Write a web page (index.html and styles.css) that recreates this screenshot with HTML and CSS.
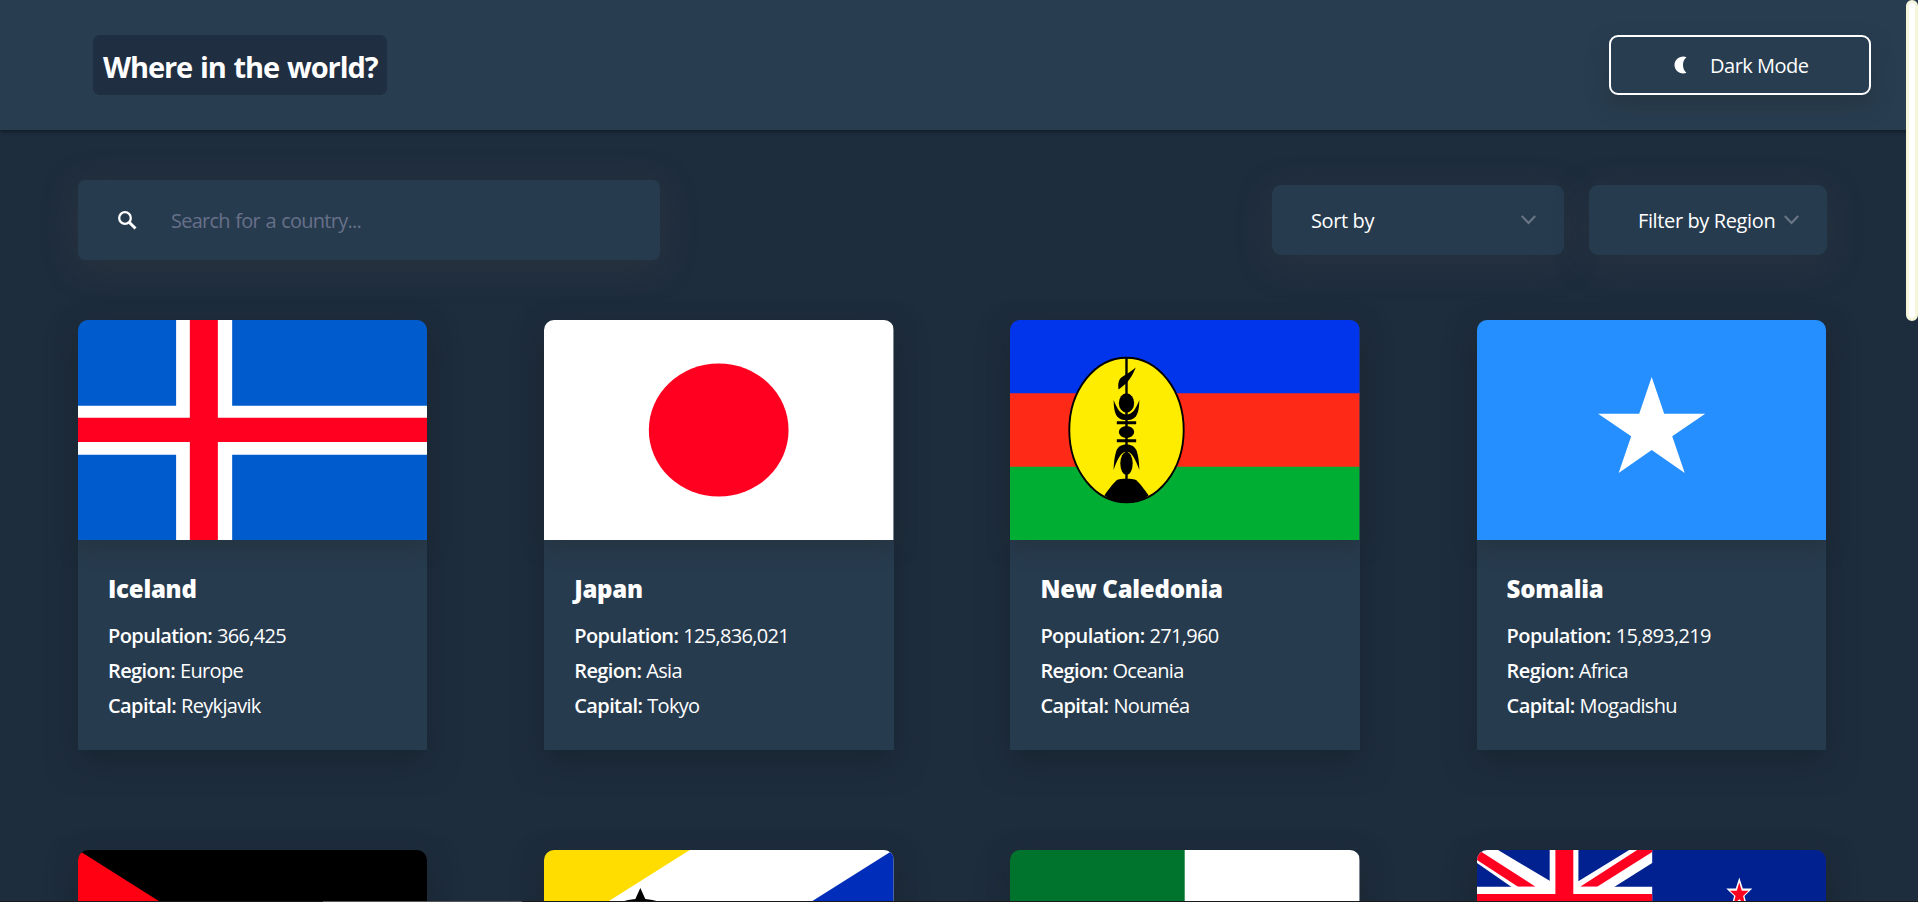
FILE: index.html
```
<!DOCTYPE html>
<html lang="en">
<head>
<meta charset="utf-8">
<title>Where in the world?</title>
<link rel="stylesheet" href="styles.css">
</head>
<body>
<div class="page">
  <header class="header">
    <h1 class="brand"><span>Where in the world?</span></h1>
    <button class="mode">
      <svg class="moon" width="13" height="18" viewBox="0 0 13 18"><path d="M12.500 1.200C10.200 3 9 5.800 9 9s1.200 6 3.500 7.800C11.600 17.200 10.500 17.500 9.300 17.500 4.400 17.500.5 13.700.5 9S4.400.5 9.300.5c1.200 0 2.300.2 3.200.7z" fill="#fff"/></svg>
      <span>Dark Mode</span>
    </button>
  </header>
  <div class="controls">
    <label class="search">
      <svg class="lens" width="19" height="19" viewBox="0 0 19 19" fill="none" stroke="#fff"><circle cx="7" cy="7" r="5.800" stroke-width="2.300"/><path d="M11.200 11.200L17.500 17.500" stroke-width="3"/></svg>
      <span>Search for a country...</span>
    </label>
    <div class="selects">
      <div class="select sort"><span>Sort by</span>
        <svg width="15" height="10" viewBox="0 0 15 10" fill="none" stroke="#6b7687" stroke-width="2"><path d="M.8 1l6.700 7L14.200 1"/></svg></div>
      <div class="select filter"><span>Filter by Region</span>
        <svg width="15" height="10" viewBox="0 0 15 10" fill="none" stroke="#6b7687" stroke-width="2"><path d="M.8 1l6.700 7L14.200 1"/></svg></div>
    </div>
  </div>
  <main class="grid">
    <article class="card">
      <svg class="flag" viewBox="0 0 349 220" preserveAspectRatio="none"><path fill="#005bcc" d="M0 0h349v220H0z"/><path fill="#fff" d="M98 0h56v220H98zM0 85.700h349v49H0z"/><path fill="#ff0020" d="M111.700 0h28v220h-28zM0 97.700h349v24.300H0z"/></svg>
      <div class="info"><h2>Iceland</h2><p><b>Population:</b> 366,425</p><p><b>Region:</b> Europe</p><p><b>Capital:</b> Reykjavik</p></div>
    </article>
    <article class="card">
      <svg class="flag" viewBox="0 0 350 220" preserveAspectRatio="none"><path fill="#fff" d="M0 0h350v220H0z"/><ellipse cx="175" cy="110" rx="70" ry="66.500" fill="#ff0020"/></svg>
      <div class="info"><h2>Japan</h2><p><b>Population:</b> 125,836,021</p><p><b>Region:</b> Asia</p><p><b>Capital:</b> Tokyo</p></div>
    </article>
    <article class="card">
      <svg class="flag" viewBox="0 0 350 220" preserveAspectRatio="none"><path fill="#0035ec" d="M0 0h350v74H0z"/><path fill="#ff2917" d="M0 73.300h350v74H0z"/><path fill="#00ae33" d="M0 146.700h350V220H0z"/><ellipse cx="116.700" cy="110" rx="57.300" ry="72.300" fill="#ffed00" stroke="#000" stroke-width="1.900"/>
        <path d="M115.500 38h2.400v132h-2.400z"/><path d="M126 47.500c-5 4.500-11 7.500-14.500 10-3 2.700-3.500 7-2.700 12C116 64 121 60 126 47.500z"/><ellipse cx="116.700" cy="83" rx="7.700" ry="9.700"/><path d="M103.800 80c3.500 9 7 14.500 12.900 14.500S126 89 129.600 80c-.3 8-1 13-3.500 16.500-2.500 3-6 3.500-9.400 3.500s-7-.5-9.400-3.500C104.800 93 104 88 103.800 80z"/><path d="M107 101.200h19.400v3H107zM107 119.300h19.400v3H107z"/><ellipse cx="116.700" cy="112" rx="7.700" ry="6"/><path d="M103.800 150c.3-8 .8-13 2.800-19.500 2-4.500 6-6 10.100-6s8 1.500 10.100 6c2 6.500 2.500 11.500 2.800 19.500-3.500-9-7-18.500-12.900-18.500S107 141 103.800 150z"/><ellipse cx="116.700" cy="143.500" rx="6.200" ry="11.500"/><path d="M94.500 175.500c4-6 9-12 12.500-15.500 3-1.800 16-1.800 19.400 0 3.500 3.500 8.500 9.500 12.500 15.500-11 9-33 9-44.400 0z"/></svg>
      <div class="info"><h2>New Caledonia</h2><p><b>Population:</b> 271,960</p><p><b>Region:</b> Oceania</p><p><b>Capital:</b> Nouméa</p></div>
    </article>
    <article class="card">
      <svg class="flag" viewBox="0 0 349 220" preserveAspectRatio="none"><path fill="#258fff" d="M0 0h349v220H0z"/><path fill="#fff" d="M174.500 57l12.500 36.800h41L195 116.300l12.500 36.700-33-23-33 23 12.500-36.700-33-22.500h41z"/></svg>
      <div class="info"><h2>Somalia</h2><p><b>Population:</b> 15,893,219</p><p><b>Region:</b> Africa</p><p><b>Capital:</b> Mogadishu</p></div>
    </article>
    <article class="card">
      <svg class="flag" viewBox="0 0 349 220" preserveAspectRatio="none"><path d="M0 0h349v73H0z"/><path fill="#fff" d="M0 73h349v74H0z"/><path fill="#007a3d" d="M0 147h349v73H0z"/><path fill="#ff0012" d="M0 0l174 110L0 220z"/></svg>
    </article>
    <article class="card">
      <svg class="flag" viewBox="0 0 350 220" preserveAspectRatio="none"><path fill="#fff" d="M100 0h250v220H0V80z"/><path fill="#ffdd00" d="M0 0h146L0 92z"/><path fill="#002db9" d="M350 0v220H0z"/><path d="M96.500 38l5 11c7 .5 12 2 17 5H74.500c5-3 10-4.500 17-5z"/></svg>
    </article>
    <article class="card">
      <svg class="flag" viewBox="0 0 350 220" preserveAspectRatio="none"><path fill="#fff" d="M174 0h176v220H174z"/><path fill="#00732c" d="M0 0h175v220H0z"/></svg>
    </article>
    <article class="card">
      <svg class="flag" viewBox="0 0 349 220" preserveAspectRatio="none"><path fill="#00218f" d="M0 0h349v220H0z"/><path fill="#fff" d="M0 0h21l52 31v7H36L0 13zM152 0h23v13l-38 24h-37v-5z"/><path fill="#ff0020" d="M0 1l3 0L58.500 36.700H41L0 10zM160 0h15v2l-55 34.700h-17z"/><path fill="#fff" d="M72.600 0h28.700v110H72.600zM0 36.700h175v36.600H0z"/><path fill="#ff0020" d="M78.300 0h17.900v110H78.300zM0 44h175v22H0z"/><path fill="#fff" d="M262 27.500l3.500 11H275l-7.800 7.500 3 12-8.200-7-8.200 7 3-12-7.800-7.500h9.500z"/><path fill="#ff0020" d="M262 32.500l2.500 8.300h6.800L265.800 46l2 8.500-5.800-5.200-5.800 5.200 2-8.500-5.500-5.200h6.800z"/></svg>
    </article>
  </main>
  <div class="thumb"></div>
  <div class="edge"></div>
</div>
</body>
</html>
```
FILE: styles.css
```
* { box-sizing: border-box; }
body { margin: 0; background: #1e2d3e; color: #fff; font-family: "Segoe UI", "Open Sans", "Noto Sans", sans-serif; font-size: 20px; }
.page { position: relative; width: 1918px; height: 902px; overflow: hidden; background: #1e2d3e; }
span { white-space: nowrap; }
.header { display: flex; align-items: center; justify-content: space-between; height: 130px; padding: 0 47px 0 93px; background: #283d50; box-shadow: 0 2px 4px rgba(0,0,0,.4); }
.brand { display: flex; align-items: center; width: 294px; height: 60px; margin: 0; padding: 2px 10px 0; border-radius: 7px; background: #1f2e40; font-size: 29px; font-weight: 700; letter-spacing: -1.100px; word-spacing: 1.500px; }
.mode { display: flex; align-items: center; width: 262px; height: 60px; padding: 0 0 0 63px; gap: 23px; border: 2px solid #fff; border-radius: 9px; background: #283d50; color: #fff; font: 500 20px "Segoe UI", "Open Sans", "Noto Sans", sans-serif; letter-spacing: -.5px; box-shadow: 0 10px 20px rgba(35,48,54,.5); }
.controls { display: flex; align-items: center; justify-content: space-between; height: 80px; margin: 50px 91px 60px 78px; }
.search { display: flex; align-items: center; gap: 34px; width: 582px; height: 80px; padding-left: 40px; border-radius: 7px; background: #273b4e; color: #68708a; letter-spacing: -.75px; word-spacing: 1px; box-shadow: 0 6px 34px rgba(60,60,62,.45); }
.selects { display: flex; gap: 25px; letter-spacing: -.38px; }
.select { display: flex; align-items: center; justify-content: space-between; height: 70px; border-radius: 9px; background: #273b4e; box-shadow: 0 8px 34px rgba(60,60,62,.35); }
.sort { width: 292px; padding: 0 28px 0 39px; }
.filter { width: 238px; padding: 0 28px 0 49px; }
.grid { display: grid; grid-template-columns: repeat(4, 349.400px); justify-content: space-between; row-gap: 100px; width: 1748px; margin-left: 78px; }
.card { height: 430px; border-radius: 10px 10px 0 0; background: #273b4e; box-shadow: 0 12px 30px rgba(20,32,40,.6); }
.flag { display: block; width: 100%; height: 220px; border-radius: 10px 10px 0 0; box-shadow: 0 6px 20px rgba(35,45,52,.6); }
.info { padding: 32px 30px; }
h2 { margin: 0 0 12px; font-size: 24px; line-height: 34px; font-weight: 800; letter-spacing: -.25px; }
p { margin: 0; line-height: 35px; white-space: nowrap; letter-spacing: -.68px; word-spacing: .4px; }
b { font-weight: 600; letter-spacing: -.6px; }
.thumb { position: absolute; right: 0; top: 0; width: 12px; height: 321px; border: 3px solid #f5f5dc; border-radius: 6px; background: #fff; }
.edge { position: absolute; left: 0; bottom: 0; width: 100%; height: 1px; background: linear-gradient(90deg, #1a1a1a 323px, #555 323px 522px, #1a1a1a 522px); }
```
